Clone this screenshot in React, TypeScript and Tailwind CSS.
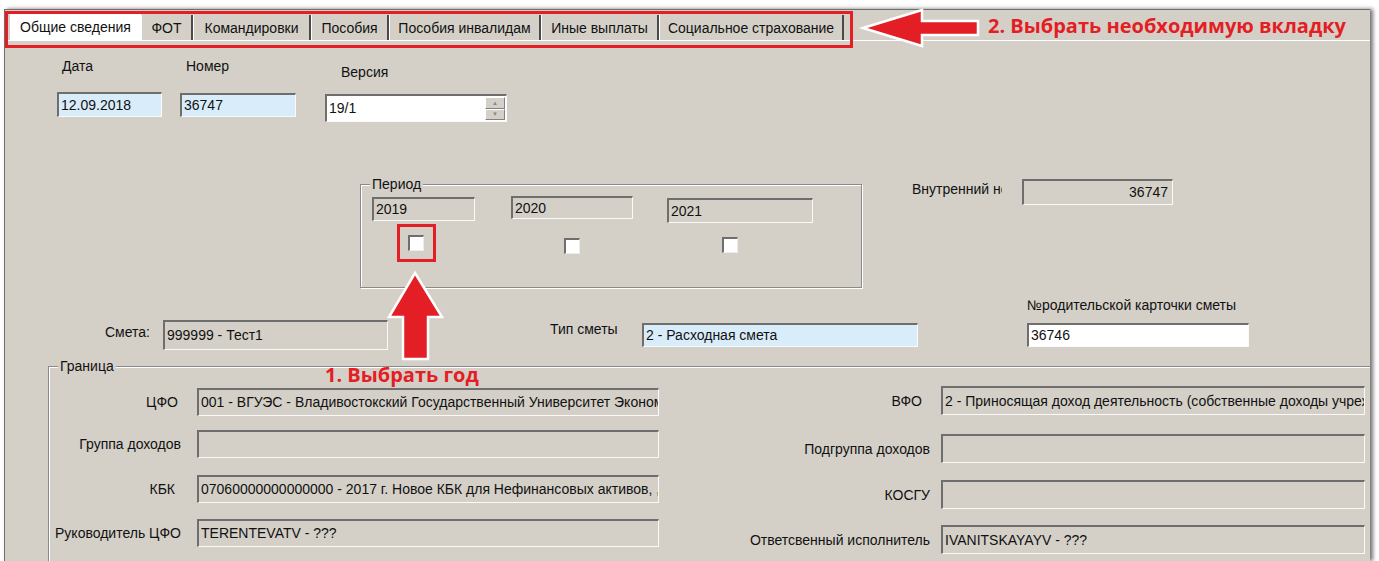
import React from "react";

type FieldProps = {
    className: string;
    tone?: "gray" | "blue" | "white";
    right?: boolean;
    children?: React.ReactNode;
};

const Field = ({ className, tone = "gray", right, children }: FieldProps) => {
    const bg =
        tone === "blue" ? "bg-[#d9ecfa]" : tone === "white" ? "bg-white" : "bg-[#d4d0c8]";
    return (
        <div
            className={`${className} ${bg} relative flex items-center overflow-hidden whitespace-nowrap border-t-2 border-l-2 border-r border-b border-t-[#6e6e6e] border-l-[#6e6e6e] border-r-[#fafafa] border-b-[#fafafa] pl-[2px] pb-[1px] leading-[16px] ${right ? "justify-end pr-[4px]" : ""}`}
        >
            {children}
        </div>
    );
};

const Check = ({ className }: { className: string }) => (
    <div
        className={`${className} w-[16px] h-[16px] bg-white border-t-2 border-l-2 border-r border-b border-t-[#6e6e6e] border-l-[#6e6e6e] border-r-[#ececec] border-b-[#ececec]`}
    />
);

const tabs = [
    { name: "ФОТ", w: "w-[52px]" },
    { name: "Командировки", w: "w-[118px]" },
    { name: "Пособия", w: "w-[78px]" },
    { name: "Пособия инвалидам", w: "w-[152px]" },
    { name: "Иные выплаты", w: "w-[118px]" },
    { name: "Социальное страхование", w: "w-[185px]" },
];

const leftRows = [
    { label: "ЦФО", text: "001 - ВГУЭС - Владивостокский Государственный Университет Экономики и Сервиса", mt: "mt-0", pr: "pr-[3px]" },
    { label: "Группа доходов", text: "", mt: "mt-[14px]", pr: "pr-0" },
    { label: "КБК", text: "07060000000000000 - 2017 г. Новое КБК для Нефинансовых активов, , ", mt: "mt-[17px]", pr: "pr-[6px]" },
    { label: "Руководитель ЦФО", text: "TERENTEVATV - ???", mt: "mt-[16px]", pr: "pr-0" },
];

const rightRows = [
    { label: "ВФО", text: "2 - Приносящая доход деятельность (собственные доходы учреждения)", mt: "mt-0", pr: "pr-[8px]" },
    { label: "Подгруппа доходов", text: "", mt: "mt-[19px]", pr: "pr-0" },
    { label: "КОСГУ", text: "", mt: "mt-[17px]", pr: "pr-0" },
    { label: "Ответсвенный исполнитель", text: "IVANITSKAYAYV - ???", mt: "mt-[16px]", pr: "pr-0" },
];

const App = () => {
    return (
        <div className="relative w-[1379px] h-[561px] overflow-hidden bg-white font-['Liberation_Sans',Arial,sans-serif] text-[14px] leading-[16px] text-[#111]">
            <div className="ml-[4px] mt-[9px] w-[1366px] h-[552px] overflow-hidden border-t border-l border-[#6f6f6f] bg-[#d4d0c8] shadow-[3px_0_4px_rgba(0,0,0,0.55)]">
                {/* tab strip */}
                <div className="h-[31px] flex items-end pl-[5px] border-b border-white">
                    <div className="w-[131px] h-[27px] bg-white flex items-center justify-center">
                        Общие сведения
                    </div>
                    {tabs.map((t) => (
                        <div
                            key={t.name}
                            className={`${t.w} h-[25px] flex items-center justify-center border-l border-l-white border-r-2 border-r-[#4a4a4a]`}
                        >
                            {t.name}
                        </div>
                    ))}
                </div>

                {/* Дата / Номер / Версия */}
                <div className="flex items-start mt-[17px]">
                    <div className="ml-[52px] w-[105px]">
                        <div className="pl-[5px] h-[16px]">Дата</div>
                        <Field className="mt-[18px] w-full h-[25px]" tone="blue">12.09.2018</Field>
                    </div>
                    <div className="ml-[18px] w-[116px]">
                        <div className="pl-[6px] h-[16px]">Номер</div>
                        <Field className="mt-[19px] w-full h-[24px]" tone="blue">36747</Field>
                    </div>
                    <div className="ml-[29px] mt-[6px] w-[182px]">
                        <div className="pl-[16px] h-[16px]">Версия</div>
                        <Field className="mt-[14px] w-full h-[28px]" tone="white">
                            19/1
                            <div className="absolute right-[1px] top-[1px] bottom-[1px] w-[20px] flex flex-col">
                                <div className="flex-1 flex items-center justify-center bg-[#d4d0c8] border border-t-white border-l-white border-r-[#808080] border-b-[#808080] text-[6px] leading-none text-[#888]">
                                    ▲
                                </div>
                                <div className="flex-1 flex items-center justify-center bg-[#d4d0c8] border border-t-white border-l-white border-r-[#808080] border-b-[#808080] text-[6px] leading-none text-[#888]">
                                    ▼
                                </div>
                            </div>
                        </Field>
                    </div>
                </div>

                {/* Период + Внутренний номер */}
                <div className="flex items-start mt-[57px]">
                    <div className="relative ml-[355px] mt-[5px] w-[502px] h-[104px] border border-[#8a8a8a] shadow-[inset_1px_1px_0_#fff,1px_1px_0_#fff]">
                        <div className="absolute -top-[9px] left-[9px] px-[2px] bg-[#d4d0c8]">Период</div>
                        <div className="flex items-start pl-[11px]">
                            <div className="w-[103px] mt-[12px]">
                                <Field className="w-full h-[24px]">2019</Field>
                                <Check className="ml-[36px] mt-[14px]" />
                            </div>
                            <div className="ml-[36px] w-[122px] mt-[11px]">
                                <Field className="w-full h-[23px]">2020</Field>
                                <Check className="ml-[53px] mt-[19px]" />
                            </div>
                            <div className="ml-[34px] w-[146px] mt-[13px]">
                                <Field className="w-full h-[25px]">2021</Field>
                                <Check className="ml-[55px] mt-[14px]" />
                            </div>
                        </div>
                    </div>
                    <div className="ml-[50px] mt-[2px] w-[90px] overflow-hidden whitespace-nowrap">
                        Внутренний номер
                    </div>
                    <Field className="ml-[20px] w-[151px] h-[26px]" right>
                        36747
                    </Field>
                </div>

                {/* Смета / Тип сметы / № родительской карточки */}
                <div className="flex items-start mt-[9px]">
                    <div className="ml-[100px] mt-[27px] w-[58px]">Смета:</div>
                    <Field className="mt-[23px] w-[225px] h-[30px]">999999 - Тест1</Field>
                    <div className="ml-[162px] mt-[24px] w-[92px]">Тип сметы</div>
                    <Field className="mt-[26px] w-[276px] h-[24px]" tone="blue">
                        2 - Расходная смета
                    </Field>
                    <div className="ml-[109px] w-[222px]">
                        <div className="h-[16px]">№родительской карточки сметы</div>
                        <Field className="mt-[10px] w-full h-[24px]" tone="white">36746</Field>
                    </div>
                </div>

                {/* Граница */}
                <div className="relative ml-[43px] mt-[16px] w-[1330px] h-[220px] border border-[#8a8a8a] shadow-[inset_1px_1px_0_#fff,1px_1px_0_#fff]">
                    <div className="absolute -top-[9px] left-[9px] px-[2px] bg-[#d4d0c8]">Граница</div>
                    <div className="flex items-start">
                        <div className="flex flex-col mt-[21px]">
                            {leftRows.map((r) => (
                                <div key={r.label} className={`flex items-center ${r.mt}`}>
                                    <div className={`w-[132px] text-right whitespace-nowrap ${r.pr}`}>{r.label}</div>
                                    <Field className="ml-[16px] w-[462px] h-[28px]">{r.text}</Field>
                                </div>
                            ))}
                        </div>
                        <div className="flex flex-col ml-[41px] mt-[19px]">
                            {rightRows.map((r) => (
                                <div key={r.label} className={`flex items-center ${r.mt}`}>
                                    <div className={`w-[230px] text-right whitespace-nowrap ${r.pr}`}>{r.label}</div>
                                    <Field className="ml-[11px] w-[424px] h-[29px]">{r.text}</Field>
                                </div>
                            ))}
                        </div>
                    </div>
                </div>
            </div>

            {/* annotations */}
            <div className="absolute left-[5px] top-[11px] w-[848px] h-[37px] border-[3px] border-[#e31e24]" />
            <div className="absolute left-[397px] top-[224px] w-[39px] h-[38px] border-[3px] border-[#e31e24]" />
            <svg className="absolute left-0 top-0 pointer-events-none" width="1379" height="561">
                <polygon
                    points="863,28 922,10 922,21 978,21 978,35 922,35 922,46"
                    fill="#e31e24"
                    stroke="#fff"
                    strokeWidth="2.5"
                    strokeLinejoin="miter"
                />
                <polygon
                    points="415,273 442,317 428,317 428,359 403,359 403,317 389,317"
                    fill="#e31e24"
                    stroke="#fff"
                    strokeWidth="2.5"
                    strokeLinejoin="miter"
                />
            </svg>
            <div className="absolute left-[988px] top-[12px] font-['Open_Sans',sans-serif] font-bold text-[20px] leading-[28px] text-[#e31e24] whitespace-nowrap">
                2. Выбрать необходимую вкладку
            </div>
            <div className="absolute left-[325px] top-[361px] font-['Open_Sans',sans-serif] font-bold text-[20px] leading-[28px] text-[#e31e24] whitespace-nowrap">
                1. Выбрать год
            </div>
        </div>
    );
};

export default App;
